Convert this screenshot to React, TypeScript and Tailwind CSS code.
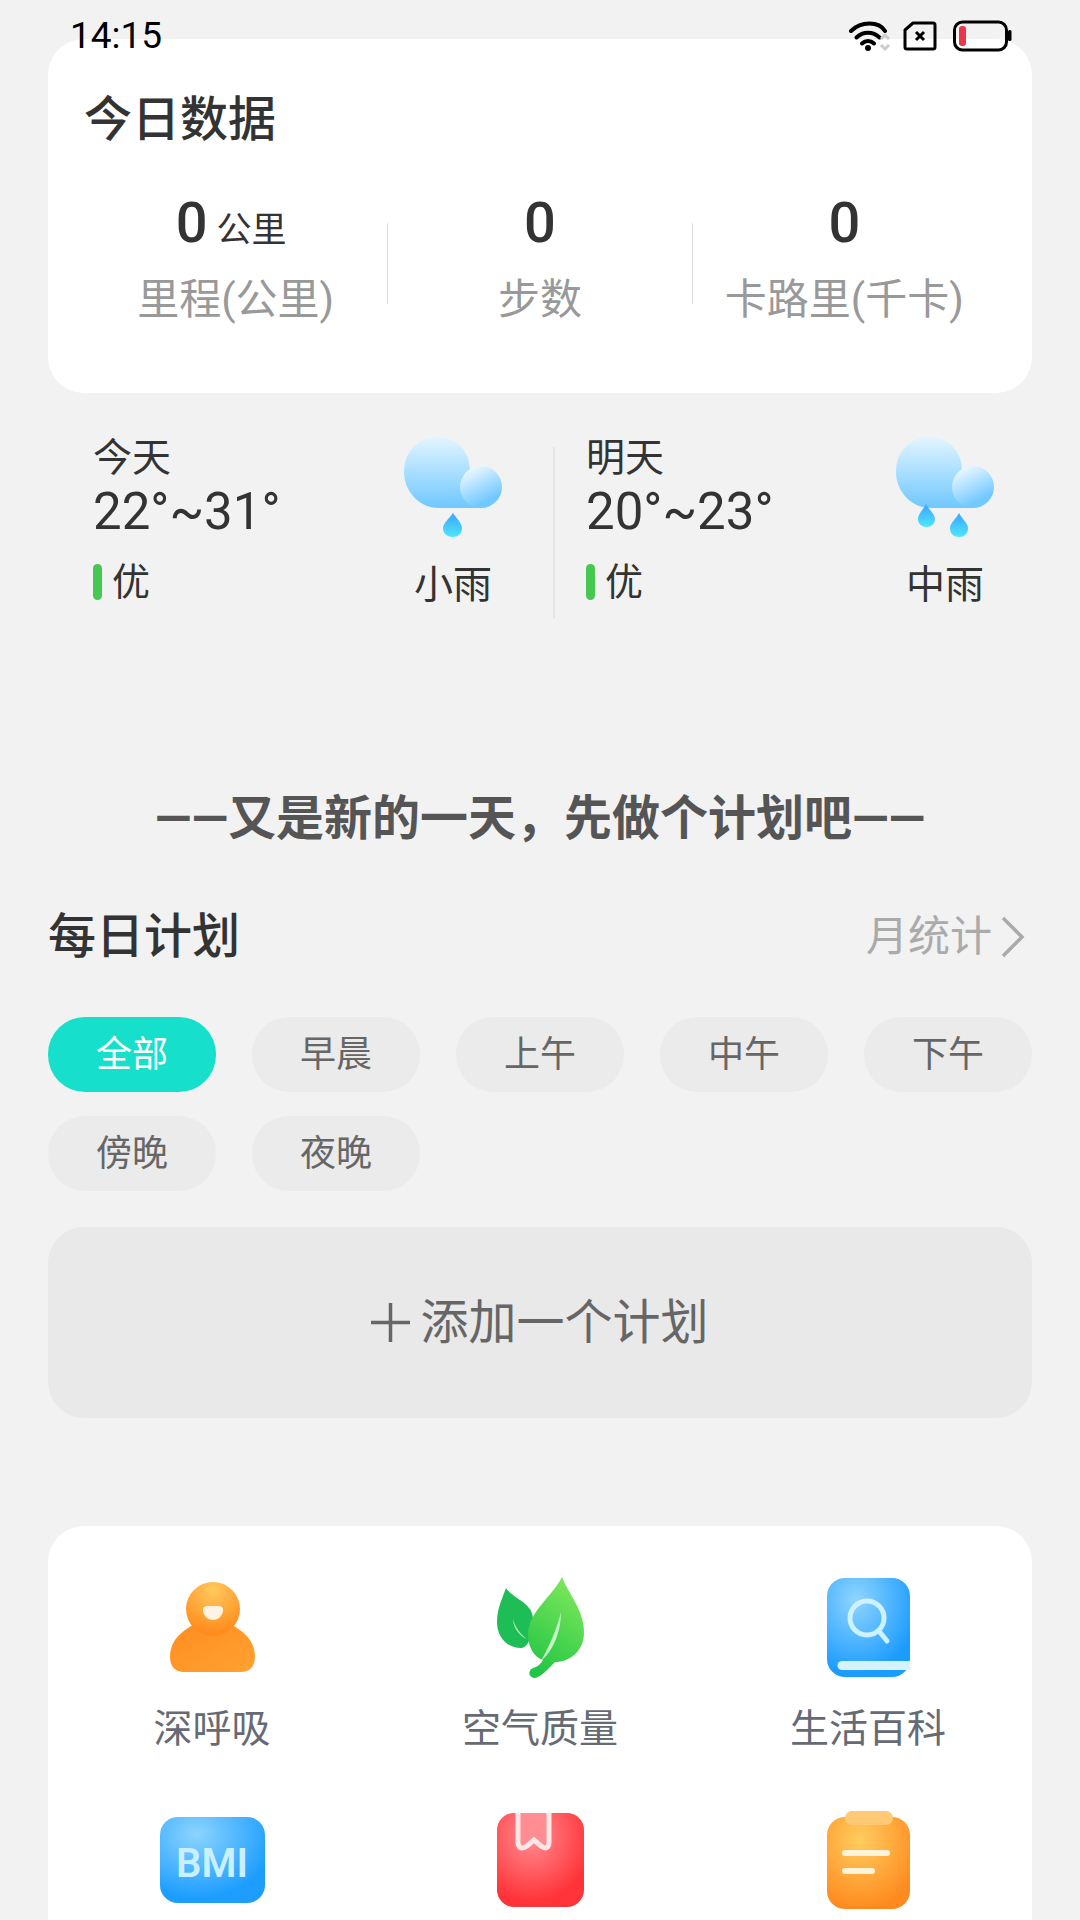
const plans = ['全部', '早晨', '上午', '中午', '下午', '傍晚', '夜晚']

function StatusIcons() {
  return (
    <div className="flex items-center">
      <svg width="46" height="32" viewBox="0 0 46 32" fill="none">
        <path d="M2 11 C12 1 30 1 36 11" stroke="#000" strokeWidth="4" strokeLinecap="round" />
        <path d="M7.5 17.5 C14 11 24 11 30.500 17.500" stroke="#000" strokeWidth="4" strokeLinecap="round" />
        <path d="M13 23.500 C16.500 20 21.500 20 25 23.500" stroke="#000" strokeWidth="4" strokeLinecap="round" />
        <circle cx="19" cy="28" r="3" fill="#000" />
        <path d="M32 19 L36 15 L40 19 M32 25 L36 29 L40 25" stroke="#ccc" strokeWidth="3" />
      </svg>
      <svg className="ml-[8px]" width="34" height="32" viewBox="0 0 34 32" fill="none">
        <path d="M10 3 H30 Q32 3 32 5 V27 Q32 29 30 29 H4 Q2 29 2 27 V10 Z" stroke="#000" strokeWidth="3" strokeLinejoin="round" />
        <path d="M13 12 L21 20 M21 12 L13 20" stroke="#000" strokeWidth="3" />
      </svg>
      <svg className="ml-[16px]" width="60" height="32" viewBox="0 0 60 32" fill="none">
        <rect x="1.500" y="2" width="52" height="28" rx="8" stroke="#000" strokeWidth="3" />
        <rect x="6" y="6" width="7" height="20" rx="3" fill="#e8394a" />
        <rect x="55" y="10" width="3.500" height="11" rx="1.500" fill="#000" />
      </svg>
    </div>
  )
}

function Cloud({ heavy }: { heavy?: boolean }) {
  const id = heavy ? 'h' : 'l'
  return (
    <svg width="98" height="101" viewBox="0 0 98 101">
      <defs>
        <linearGradient id={`cloud-${id}`} x1="0" y1="0" x2="0" y2="1">
          <stop offset="0" stopColor="#e2f5ff" />
          <stop offset="1" stopColor="#6fc8ff" />
        </linearGradient>
        <linearGradient id={`puff-${id}`} x1="0.100" y1="0.100" x2="0.500" y2="0.900">
          <stop offset="0" stopColor="#eef9ff" />
          <stop offset="1" stopColor="#72c9ff" />
        </linearGradient>
        <linearGradient id={`drop-${id}`} x1="0" y1="0" x2="0" y2="1">
          <stop offset="0" stopColor="#3ba4ff" />
          <stop offset="1" stopColor="#4fe6ff" />
        </linearGradient>
      </defs>
      <path d="M33 0 C52 0 66 14 66 33 L77 71 L35 71 C14 71 0 53 0 35 C0 15 14 0 33 0 Z" fill={`url(#cloud-${id})`} />
      <circle cx="77" cy="50" r="21" fill={`url(#puff-${id})`} />
      {heavy ? (
        <>
          <path d="M63 76 C60 82 54 86 54 91 C54 97 58 100 63 100 C68 100 72 97 72 91 C72 86 66 82 63 76 Z" fill={`url(#drop-${id})`} />
          <path d="M30 67 C27 73 22 77 22 82 C22 87 26 90 30.500 90 C35 90 39 87 39 82 C39 77 33 73 30 67 Z" fill={`url(#drop-${id})`} />
        </>
      ) : (
        <path d="M49 76 C45 82 39 86 39 91 C39 97 44 100 49 100 C54 100 58 97 58 91 C58 86 53 82 49 76 Z" fill={`url(#drop-${id})`} />
      )}
    </svg>
  )
}

function Person() {
  return (
    <svg width="85" height="90" viewBox="0 0 85 90">
      <defs>
        <radialGradient id="head" cx="0.500" cy="0.150" r="0.800">
          <stop offset="0" stopColor="#ffc95e" />
          <stop offset="1" stopColor="#ff8c1c" />
        </radialGradient>
        <linearGradient id="torso" x1="0" y1="0" x2="1" y2="1">
          <stop offset="0" stopColor="#ff8d1e" />
          <stop offset="1" stopColor="#ffa233" />
        </linearGradient>
      </defs>
      <path d="M18 46 C7 53 0 62 0 75 C0 85 6 90 14 90 H71 C79 90 85 85 85 75 C85 62 78 53 67 46 L58 40 H27 Z" fill="url(#torso)" />
      <circle cx="43" cy="27" r="27" fill="url(#head)" />
      <path d="M33 28 C33 25 35 24 38 24 H48 C51 24 53 25 53 28 C53 34 48 38 43 38 C38 38 33 34 33 28 Z" fill="#fff3e2" />
    </svg>
  )
}

function Leaves() {
  return (
    <svg width="87" height="101" viewBox="0 0 87 101">
      <defs>
        <linearGradient id="leaf-big" x1="0.700" y1="0" x2="0.300" y2="1">
          <stop offset="0" stopColor="#7ee85c" />
          <stop offset="1" stopColor="#22c544" />
        </linearGradient>
      </defs>
      <path d="M9 11 C16 22 36 26 36 42 C36 55 32 71 24 71 C10 71 0 60 0 45 C0 32 5 22 9 11 Z" fill="#1fbd55" />
      <path d="M16 42 C18 50 24 58 30 62 C24 60 16 52 16 42 Z" fill="#a5ecb0" />
      <path d="M65 0 C72 18 87 33 87 55 C87 75 72 85 58 85 C50 93 44 100 38 101 C32 101 30 94 36 91 C40 90 44 87 46 83 C36 80 31 68 31 58 C31 35 55 20 65 0 Z" fill="url(#leaf-big)" />
      <path d="M64 35 C64 52 58 72 44 84 C52 70 60 52 64 35 Z" fill="#c6f5c4" />
    </svg>
  )
}

function BookSearch() {
  return (
    <svg width="83" height="99" viewBox="0 0 83 99">
      <defs>
        <radialGradient id="book" cx="0.350" cy="0.220" r="0.750">
          <stop offset="0" stopColor="#8fd5ff" />
          <stop offset="1" stopColor="#1d9cff" />
        </radialGradient>
      </defs>
      <rect width="83" height="99" rx="18" fill="url(#book)" />
      <circle cx="40" cy="40" r="17" fill="none" stroke="#cdf1ff" strokeWidth="5" />
      <path d="M52 53 L60 63" stroke="#cdf1ff" strokeWidth="5" strokeLinecap="round" />
      <path d="M15 83 H83 V92 H15 A4.500 4.500 0 0 1 15 83 Z" fill="#d5f2ff" />
    </svg>
  )
}

function Bmi() {
  return (
    <svg width="105" height="86" viewBox="0 0 105 86">
      <defs>
        <radialGradient id="bmi" cx="0.350" cy="0.200" r="0.750">
          <stop offset="0" stopColor="#8cd4ff" />
          <stop offset="1" stopColor="#1c9dff" />
        </radialGradient>
      </defs>
      <rect width="105" height="86" rx="18" fill="url(#bmi)" />
      <text x="52" y="60" textAnchor="middle" fontFamily="Roboto" fontWeight="600" fontSize="40" fill="#c8f0ff">BMI</text>
    </svg>
  )
}

function RedBook() {
  return (
    <svg width="87" height="94" viewBox="0 0 87 94">
      <defs>
        <radialGradient id="red" cx="0.400" cy="0.250" r="0.700">
          <stop offset="0" stopColor="#ff8d92" />
          <stop offset="1" stopColor="#ff3338" />
        </radialGradient>
      </defs>
      <rect width="87" height="94" rx="17" fill="url(#red)" />
      <path d="M21 0 V29 C21 36 26 36 30 33 L37 27 L44 33 C48 36 52 36 52 29 V0" fill="#ff8d92" stroke="#ffe6e7" strokeWidth="5" />
    </svg>
  )
}

function Clipboard() {
  return (
    <svg width="83" height="98" viewBox="0 0 83 98">
      <defs>
        <radialGradient id="clip" cx="0.400" cy="0.250" r="0.750">
          <stop offset="0" stopColor="#ffcd5e" />
          <stop offset="1" stopColor="#ff8b20" />
        </radialGradient>
      </defs>
      <rect y="6" width="83" height="92" rx="18" fill="url(#clip)" />
      <rect x="18" width="48" height="14" rx="7" fill="#ffc976" />
      <path d="M18 42 H60" stroke="#fff3da" strokeWidth="6" strokeLinecap="round" />
      <path d="M18 60 H45" stroke="#fff3da" strokeWidth="6" strokeLinecap="round" />
    </svg>
  )
}

function Stat({ value, unit, label }: { value: string; unit?: string; label: string }) {
  return (
    <div className="flex-1 flex flex-col items-center">
      <div className={`flex items-baseline h-[72px] ${unit ? 'pr-[9px]' : ''}`}>
        <span className="text-[56px] leading-[72px] font-medium text-[#333]">{value}</span>
        {unit && <span className="ml-[9px] text-[35px] text-[#333]">{unit}</span>}
      </div>
      <div className="mt-[13px] text-[42px] leading-[56px] text-[#999]">{label}</div>
    </div>
  )
}

function Day({ name, temp, weather, heavy, className }: { name: string; temp: string; weather: string; heavy?: boolean; className: string }) {
  return (
    <div className={`flex justify-between ${className}`}>
      <div>
        <div className="mt-[-4px] text-[39px] leading-[50px] text-[#333]">{name}</div>
        <div className="text-[51px] leading-[58px] text-[#333]">{temp}</div>
        <div className="mt-[17px] flex items-center">
          <span className="w-[9px] h-[36px] rounded-full bg-[#46c74f]" />
          <span className="ml-[10px] text-[38px] leading-[48px] text-[#333]">优</span>
        </div>
      </div>
      <div className="w-[98px] flex flex-col items-center">
        <Cloud heavy={heavy} />
        <div className="mt-[22px] text-[39px] leading-[50px] text-[#333]">{weather}</div>
      </div>
    </div>
  )
}

function Tool({ icon, label }: { icon: React.ReactNode; label?: string }) {
  return (
    <div className="flex flex-col items-center">
      <div className="h-[110px] flex items-center justify-center">{icon}</div>
      {label && <div className="mt-[19px] text-[39px] leading-[56px] text-[#666a75]">{label}</div>}
    </div>
  )
}

export default function App() {
  return (
    <div className="relative h-[1920px] overflow-hidden bg-[#f2f2f2] font-['Roboto','Noto_Sans_CJK_SC',sans-serif]">
      {/* status bar sits over the first card */}
      <div className="absolute top-[20px] left-[70px] right-[67px] flex items-center justify-between">
        <span className="text-[37px] leading-[32px] text-black">14:15</span>
        <StatusIcons />
      </div>

      <div className="mx-[48px] mt-[39px] h-[354px] rounded-[36px] bg-white px-[36px] pt-[53px]">
        <h1 className="text-[48px] leading-[56px] font-medium text-[#333]">今日数据</h1>
        <div className="mt-[39px] flex items-start">
          <Stat value="0" unit="公里" label="里程(公里)" />
          <div className="w-px h-[81px] mt-[36px] bg-[#ddd]" />
          <Stat value="0" label="步数" />
          <div className="w-px h-[81px] mt-[36px] bg-[#ddd]" />
          <Stat value="0" label="卡路里(千卡)" />
        </div>
      </div>

      <div className="mt-[44px] flex">
        <Day className="w-[553px] pl-[93px] pr-[51px]" name="今天" temp="22°~31°" weather="小雨" />
        <div className="w-[2px] h-[171px] mt-[10px] bg-[#e5e5e5]" />
        <Day className="flex-1 pl-[31px] pr-[86px]" name="明天" temp="20°~23°" weather="中雨" heavy />
      </div>

      <div className="mt-[171px] text-center text-[48px] leading-[60px] font-bold text-[#555]">{'——又是新的一天\uFF0C先做个计划吧——'}</div>

      <div className="mt-[58px] mx-[48px] flex items-center justify-between">
        <h2 className="text-[48px] leading-[60px] font-medium text-[#333]">每日计划</h2>
        <div className="flex items-center text-[42px] leading-[60px] text-[#aaa]">
          月统计
          <svg className="ml-[9px] mr-[7px]" width="24" height="42" viewBox="0 0 24 42" fill="none">
            <path d="M2 2 L21 21 L2 40" stroke="#aaa" strokeWidth="3.500" />
          </svg>
        </div>
      </div>

      <div className="mt-[50px] mx-[48px] grid grid-cols-5 gap-x-[36px] gap-y-[24px]">
        {plans.map((p, i) => (
          <div
            key={p}
            className={`h-[75px] rounded-[37px] flex items-center justify-center text-[36px] ${i === 0 ? 'bg-[#16dfcb] text-white' : 'bg-[#ebebeb] text-[#666]'}`}
          >
            {p}
          </div>
        ))}
      </div>

      <div className="mt-[36px] mx-[48px] h-[191px] rounded-[36px] bg-[#e9e9e9] flex items-center justify-center text-[48px] text-[#666]">
        <svg className="mr-[10px]" width="39" height="39" viewBox="0 0 39 39" fill="none">
          <path d="M19.500 0 V39 M0 19.500 H39" stroke="#666" strokeWidth="3.500" />
        </svg>
        添加一个计划
      </div>

      <div className="mt-[108px] mx-[48px] h-[500px] rounded-[36px] bg-white pt-[46px] grid grid-cols-3 content-start gap-y-[48px]">
        <Tool icon={<Person />} label="深呼吸" />
        <Tool icon={<Leaves />} label="空气质量" />
        <Tool icon={<BookSearch />} label="生活百科" />
        <Tool icon={<Bmi />} />
        <Tool icon={<RedBook />} />
        <Tool icon={<Clipboard />} />
      </div>
    </div>
  )
}
